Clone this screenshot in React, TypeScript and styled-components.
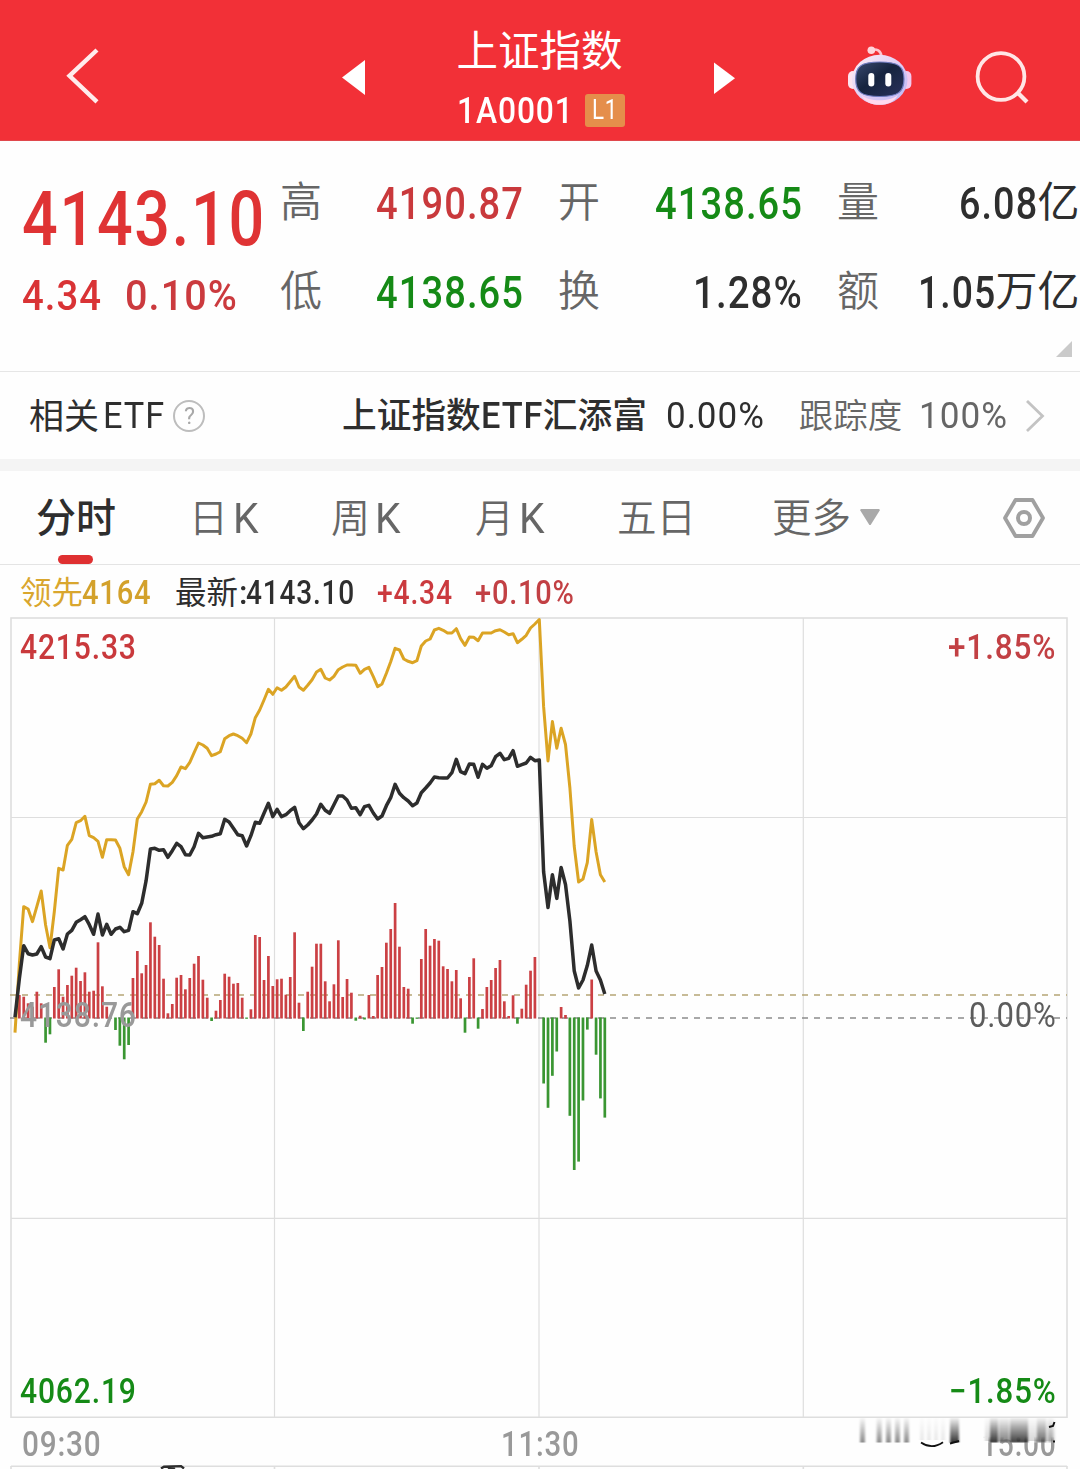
import React, { useLayoutEffect, useRef, useState } from "react";
import styled, { createGlobalStyle } from "styled-components";

const RED = "#d93335";
const GREEN = "#158a16";
const INK = "#2e2e2e";
const GREY = "#666666";

const Global = createGlobalStyle`
  * { box-sizing: border-box; }
  html, body { margin: 0; padding: 0; background: #fefefe; }
  body { width: 1080px; height: 1469px; overflow: hidden; font-family: Roboto, "Noto Sans CJK SC", sans-serif; }
`;

/* ---------- text ---------- */

const Cjk = styled.span<{ $size: number; $line: number; $color?: string; $weight?: number; $left?: number }>`
  display: block;
  flex: none;
  font-family: "Noto Sans CJK SC", sans-serif;
  font-size: ${(p) => p.$size}px;
  line-height: ${(p) => p.$line}px;
  color: ${(p) => p.$color ?? INK};
  font-weight: ${(p) => p.$weight ?? 400};
  margin-left: ${(p) => p.$left ?? 0}px;
  white-space: nowrap;
`;

const FigureBox = styled.span<{ $width: number; $size: number; $line: number; $color?: string; $weight?: number; $left?: number }>`
  display: block;
  flex: none;
  width: ${(p) => p.$width}px;
  height: ${(p) => p.$line}px;
  font-family: Roboto, sans-serif;
  font-size: ${(p) => p.$size}px;
  line-height: ${(p) => p.$line}px;
  color: ${(p) => p.$color ?? INK};
  font-weight: ${(p) => p.$weight ?? 500};
  margin-left: ${(p) => p.$left ?? 0}px;
`;

const TRACKING = 0.028;

const FigureText = styled.span`
  display: inline-block;
  white-space: nowrap;
  letter-spacing: ${TRACKING}em;
  transform-origin: 0 50%;
`;

type FigureProps = {
  children: string;
  width: number;
  size: number;
  line: number;
  color?: string;
  weight?: number;
  left?: number;
};

/* Condensed figures: the text is squeezed horizontally to its column width. */
function Figure({ children, width, size, line, color, weight, left }: FigureProps) {
  const ref = useRef<HTMLSpanElement>(null);
  const [scale, setScale] = useState(1);
  useLayoutEffect(() => {
    if (ref.current) setScale(width / (ref.current.offsetWidth - size * TRACKING));
  }, [width, size, children]);
  return (
    <FigureBox $width={width} $size={size} $line={line} $color={color} $weight={weight} $left={left}>
      <FigureText ref={ref} style={{ transform: `scaleX(${scale})` }}>
        {children}
      </FigureText>
    </FigureBox>
  );
}

/* ---------- header ---------- */

const Page = styled.main`
  width: 1080px;
  height: 1469px;
  overflow: hidden;
  display: flex;
  flex-direction: column;
  background: #fefefe;
`;

const Header = styled.header`
  height: 141px;
  flex: none;
  display: grid;
  grid-template-columns: 342px 395px 343px;
  background: #f23037;
  border-bottom: 1px solid #e0484c;
`;

const HeaderSide = styled.div<{ $pad: string }>`
  display: flex;
  align-items: flex-start;
  padding: ${(p) => p.$pad};
`;

const Switcher = styled.div`
  display: flex;
  justify-content: space-between;
  align-items: flex-start;
`;

const Arrow = styled.svg<{ $top: number }>`
  display: block;
  margin-top: ${(p) => p.$top}px;
`;

const TitleStack = styled.div`
  display: flex;
  flex-direction: column;
  align-items: center;
  padding-top: 18px;
`;

const CodeLine = styled.div`
  display: flex;
  margin-top: 2px;
  padding-left: 2px;
`;

const Level = styled.span`
  display: flex;
  justify-content: center;
  width: 40px;
  height: 33px;
  margin: 14px 0 0 12px;
  border-radius: 3px;
  background: #e58e4b;
`;

const Icon = styled.svg<{ $left?: number; $top?: number }>`
  display: block;
  flex: none;
  margin-left: ${(p) => p.$left ?? 0}px;
  margin-top: ${(p) => p.$top ?? 0}px;
`;

function Robot() {
  return (
    <Icon width="64" height="60" viewBox="0 0 64 60" $top={0}>
      <defs>
        <linearGradient id="shell" x1="0" y1="0" x2="1" y2="1">
          <stop offset="0" stopColor="#fff0f6" />
          <stop offset=".55" stopColor="#dccbf5" />
          <stop offset="1" stopColor="#b9b4f4" />
        </linearGradient>
        <linearGradient id="visor" x1="0" y1="0" x2="1" y2="1">
          <stop offset="0" stopColor="#3a4a70" />
          <stop offset=".45" stopColor="#16243f" />
          <stop offset="1" stopColor="#2a315c" />
        </linearGradient>
      </defs>
      <path d="M23 4c6-1.6 9.500 .5 10.500 6" fill="none" stroke="#ffc4cf" strokeWidth="2.6" />
      <circle cx="23.3" cy="4.2" r="3.8" fill="#ffd5dc" />
      <rect x="0" y="25" width="10" height="18" rx="5" fill="#fde3ef" />
      <rect x="53.400" y="25" width="10" height="18" rx="5" fill="#f3c9ee" />
      <ellipse cx="31.700" cy="33.800" rx="27.8" ry="25" fill="url(#shell)" />
      <path d="M13 49c8 7 29 7 37 0-4 7-10 9.800-18.500 9.800S17 56 13 49z" fill="#ffd9ee" />
      <path d="M31.700 16C50 16 56 20 56 33S50 50.500 31.700 50.500S7.700 46 7.700 33S13.500 16 31.700 16z" fill="url(#visor)" stroke="#6f7cc0" strokeWidth="1.2" />
      <rect x="20.3" y="27" width="6" height="13.6" rx="3" fill="#fff" />
      <rect x="37.3" y="27" width="6" height="13.6" rx="3" fill="#fff" />
    </Icon>
  );
}

/* ---------- quote ---------- */

const Quote = styled.section`
  height: 231px;
  flex: none;
  display: flex;
  align-items: flex-start;
  position: relative;
  border-bottom: 1px solid #e6e6e6;
`;

const PriceColumn = styled.div`
  width: 280px;
  padding: 30px 0 0 22px;
`;

const ChangeLine = styled.div`
  display: flex;
  margin-top: -1px;
`;

const StatGrid = styled.div`
  display: grid;
  grid-template-columns: 243px 244px 242.5px;
  grid-template-rows: 89px 68px;
  column-gap: 35px;
  padding-top: 29px;
`;

const Stat = styled.div`
  display: flex;
  justify-content: space-between;
  align-items: flex-start;
`;

const StatValue = styled.div`
  display: flex;
`;

const Corner = styled.svg`
  position: absolute;
  right: 8px;
  bottom: 14px;
`;

type StatItem = { label: string; value: string; width: number; color?: string; unit?: string };

const stats: StatItem[] = [
  { label: "高", value: "4190.87", width: 147, color: "#c9393c" },
  { label: "开", value: "4138.65", width: 147, color: GREEN },
  { label: "量", value: "6.08", width: 78, unit: "亿" },
  { label: "低", value: "4138.65", width: 147, color: GREEN },
  { label: "换", value: "1.28%", width: 109 },
  { label: "额", value: "1.05", width: 77, unit: "万亿" },
];

/* ---------- related ETF ---------- */

const EtfRow = styled.section`
  height: 87px;
  flex: none;
  display: flex;
  align-items: flex-start;
  padding-left: 29px;
`;

const Divider = styled.div`
  height: 12px;
  flex: none;
  background: #f4f4f4;
`;

const Help = styled.span`
  display: flex;
  justify-content: center;
  width: 32px;
  height: 32px;
  margin: 28px 0 0 9px;
  border: 2px solid #bdbdbd;
  border-radius: 50%;
`;

/* ---------- tabs ---------- */

const Tabs = styled.nav`
  height: 94px;
  flex: none;
  display: flex;
  align-items: flex-start;
  border-bottom: 1px solid #e4e4e4;
  position: relative;
`;

const Tab = styled.div<{ $width: number; $pad: number }>`
  display: flex;
  flex: none;
  width: ${(p) => p.$width}px;
  padding-left: ${(p) => p.$pad}px;
`;

const Underline = styled.span`
  position: absolute;
  left: 58px;
  bottom: 0;
  width: 35px;
  height: 9px;
  border-radius: 4.5px;
  background: #df3031;
`;

/* ---------- chart ---------- */

const Legend = styled.div`
  height: 52px;
  flex: none;
  display: flex;
  padding-left: 20px;
`;

const ChartArea = styled.section`
  position: relative;
  height: 801px;
  flex: none;
`;

const ChartSvg = styled.svg`
  display: block;
`;

const ChartLabel = styled.div<{ $top: number; $right?: boolean }>`
  position: absolute;
  top: ${(p) => p.$top}px;
  ${(p) => (p.$right ? "right: 24px;" : "left: 20px;")}
`;

const Axis = styled.div`
  position: relative;
  height: 51px;
  flex: none;
  display: flex;
`;

const AxisOverlay = styled.svg`
  position: absolute;
  left: 0;
  top: 0;
`;

const STEP = 4.369;
const X0 = 15;
const TOP = 617;
const BASE = 1018;

const lead = [
  1032.7, 963, 906.7, 909, 921.7, 906.7, 891, 925, 947.7, 911.7, 868.3, 870, 845.3, 839.3, 822.7, 820.7, 816.3, 835.7, 837.7, 841.3,
  857.3, 839.7, 839.7, 840, 848.3, 866.7, 874.7, 851.7, 819, 811.7, 802, 784.3, 783.7, 780.3, 785.7, 786, 782.3, 775.7, 767, 768.7,
  762.3, 752.7, 743, 745, 748.3, 755.7, 754, 751.7, 738.7, 735.7, 734, 735.7, 738.3, 742.7, 734, 717.7, 710, 700, 689.3, 694.3,
  687.7, 690.3, 687, 681.7, 676.3, 687, 690.3, 685.3, 679.7, 672, 669.3, 678, 680, 676.3, 669.7, 667, 665, 665, 665.3, 673.3,
  669.3, 667.3, 676.7, 686.7, 684, 673.3, 661.7, 648.3, 650, 659, 661.3, 662.7, 660.7, 646, 641, 639, 630, 628.3, 630.3, 633,
  633, 628.7, 638.7, 645.3, 637, 637.3, 640.7, 633, 633, 633, 630.7, 629.7, 632, 634.7, 633.7, 642.7, 639.3, 635.3, 628, 624,
  619.5, 706.4, 760.9, 721.6, 748.2, 728.2, 744.5, 788, 846, 882, 879, 862.7, 819.5, 852, 874.7, 882,
];

const price = [
  1017.3, 978.3, 945.7, 953.7, 955, 954, 946.7, 957, 958.7, 940, 938.7, 949, 934, 930.3, 922.3, 919.7, 916.7, 924.7, 934.3, 914,
  935, 924.3, 934.3, 929, 927.3, 931.7, 930.3, 911.7, 913.7, 903.3, 880.7, 849, 848.3, 850.3, 849.7, 857.3, 850.7, 843.3, 846.7, 854.7,
  855, 846.7, 833.3, 837.7, 837, 836.3, 834.7, 833.7, 819.3, 822, 828.3, 834.7, 835.7, 846, 835.7, 822.3, 823.3, 813.3, 803.3, 816.7,
  809.3, 816.7, 814.7, 810.7, 807.3, 822.7, 828.7, 825, 820, 814, 804.3, 810.3, 813.3, 804.7, 796, 796, 800, 808.3, 807.7, 814.7,
  806.7, 805.3, 813, 819, 816, 805.7, 797.7, 784.3, 793.3, 797.7, 801, 805.7, 803, 792.7, 788, 783, 777, 777.7, 778, 778,
  772.7, 759.3, 771.7, 773.7, 764, 764.3, 777.3, 764.3, 768.3, 765.7, 756.7, 753.3, 759.7, 758.3, 750.7, 766.3, 764.7, 763, 757.3, 760.7,
  760, 871.8, 907.5, 874.7, 898.4, 867.5, 884.5, 921, 970.7, 988, 980, 965.6, 945, 971, 980, 994,
];

/* End of each momentum bar; smaller than BASE rises in red, larger falls in green. */
const bars = [
  BASE, 995, 996.7, 1003.3, 1006.7, 991.7, 1003.3, 1042.7, 1034.3, 987, 969.3, 996.7, 985, 975.7, 967.7, 981, 972.3, 991.7, 990.7, 942.3,
  986.3, 1006.7, BASE, 1030, 1045.7, 1059.3, 1045, 978, 951, 973.3, 965, 922.3, 936.7, 945, 978.7, 1013.3, 1004, 977.7, 975, 989.3,
  978, 963.7, 956, 979.7, 997.7, 1021, 1010.7, 1000, 973.7, 976.7, 983.7, 983, 997.7, 1018.8, 1009.3, 935, 937, 980, 956, 986,
  979.3, 978.7, 994.7, 977, 932.3, 1002.7, 1031, 991.7, 966.7, 943.7, 943.7, 981.3, 1001.3, 984.3, 940.3, 997, 979, 992.7, 1020.7, 1015.7,
  1019.5, 995, 1016, 975, 967, 942.7, 929, 903, 946.7, 987, 988.7, 1023.7, 1018.8, 959, 929, 945.7, 939, 940.7, 966.3, 969,
  981.3, 970, 998.3, 1032.7, 977, 958.3, 1028.7, 1009, 987, 980, 968, 960, 1001.3, 1016, 995.3, 1023.7, 1008.7, 984.7, 970.7, 957,
  BASE, 1083.5, 1107.8, 1075.8, 1051.5, 1007, 1015, 1115.8, 1170, 1161.6, 1100.5, 1029.6, 979.5, 1054.7, 1098.4, 1117.6,
];

const toPoints = (ys: number[]) => ys.map((y, i) => `${(X0 + i * STEP).toFixed(1)},${y}`).join(" ");

function IntradayChart() {
  return (
    <ChartSvg width="1080" height="801" viewBox={`0 ${TOP} 1080 801`}>
      <g stroke="#dedede" strokeWidth="1.2" fill="none">
        <path d="M274.5 618V1417M539 618V1417M803.3 618V1417M11 817.5H1067M11 1218.3H1067" />
        <rect x="11" y="618" width="1056" height="799.3" strokeWidth="1.6" />
      </g>
      <path d="M10 995H1067" stroke="#b5a576" strokeWidth="1.6" strokeDasharray="6 6" />
      <path d="M10 1018H1067" stroke="#8c8c8c" strokeWidth="1.6" strokeDasharray="6 6" />
      {bars.map((y, i) =>
        y === BASE ? null : (
          <rect
            key={i}
            x={X0 + i * STEP - 1.35}
            width="2.7"
            y={Math.min(y, BASE - 0.5)}
            height={Math.abs(y - BASE) + 0.5}
            fill={y < BASE ? "#cb4044" : "#3a9632"}
          />
        )
      )}
      <polyline points={toPoints(lead)} fill="none" stroke="#dba424" strokeWidth="3" strokeLinejoin="round" />
      <polyline points={toPoints(price)} fill="none" stroke="#2d2d2d" strokeWidth="3.5" strokeLinejoin="round" />
    </ChartSvg>
  );
}

/* Faded remains of the watermark along the right end of the time axis. */
function Watermark() {
  const faint = [860, 876.7, 886, 895, 904];
  const dark: [number, number, number][] = [
    [950, 9, 0.8],
    [990, 8, 0.75],
    [999, 10, 0.4],
    [1010, 18, 0.7],
    [1037, 9, 0.5],
    [1048, 5, 0.25],
  ];
  return (
    <AxisOverlay width="1080" height="51" viewBox="0 1418 1080 51">
      <defs>
        <linearGradient id="smear" x1="0" y1="0" x2="0" y2="1">
          <stop offset="0" stopColor="#000" stopOpacity="0.06" />
          <stop offset="1" stopColor="#000" />
        </linearGradient>
        <linearGradient id="veil" x1="0" y1="0" x2="0" y2="1">
          <stop offset="0.75" stopColor="#fefefe" />
          <stop offset="1" stopColor="#fefefe" stopOpacity="0.2" />
        </linearGradient>
        <filter id="soften" x="-20%" y="-5%" width="140%" height="110%">
          <feGaussianBlur stdDeviation="0.9 0.2" />
        </filter>
      </defs>
      <rect x="858" y="1416" width="199" height="27" fill="url(#veil)" />
      <g filter="url(#soften)">
        <rect x="985" y="1418" width="70" height="23" fill="url(#smear)" opacity="0.15" />
        {faint.map((x) => (
          <rect key={x} x={x} y="1418" width="5" height="24.5" fill="url(#smear)" opacity="0.45" />
        ))}
        {[920, 927, 934, 941].map((x) => (
          <rect key={x} x={x} y="1418" width="4" height="22" fill="url(#smear)" opacity="0.08" />
        ))}
        {dark.map(([x, w, o]) => (
          <rect key={x} x={x} y="1418" width={w} height="24.5" fill="url(#smear)" opacity={o} />
        ))}
      </g>
      <path d="M921 1442.5q11 7.5 22-.3" fill="none" stroke="#111" strokeWidth="1.8" />
      <path d="M950 1443.5l9-2.5M1049 1427l4-1l1.500-4M1053 1441.5h2" fill="none" stroke="#111" strokeWidth="2" />
      <path d="M11 1466.3H1067M11 1466V1469M274.5 1466V1469M539 1466V1469M803.3 1466V1469M1067 1466V1469" stroke="#dedede" strokeWidth="1.6" />
      <path d="M161 1468.500l3-1.8 17-.6 3 2.400M168 1469.500l7-2" fill="none" stroke="#2d2d2d" strokeWidth="2.4" />
    </AxisOverlay>
  );
}

export default function App() {
  return (
    <Page>
      <Global />
      <Header>
        <HeaderSide $pad="48px 0 0 66px">
          <Icon width="34" height="57" viewBox="66 48 34 57">
            <path d="M97 50L69.5 75.8L97 101.8" fill="none" stroke="#ffecec" strokeWidth="4.4" />
          </Icon>
        </HeaderSide>
        <Switcher>
          <Arrow width="24" height="36" viewBox="342 60 24 36" $top={60}>
            <path d="M365 60V95L342 77.5z" fill="#fff" />
          </Arrow>
          <TitleStack>
            <Cjk $size={41.5} $line={60} $color="#fff" $weight={400}>上证指数</Cjk>
            <CodeLine>
              <Figure width={116} size={37} line={62} color="#fff" weight={500}>1A0001</Figure>
              <Level>
                <Figure width={25} size={27} line={33} color="#fff" weight={400}>L1</Figure>
              </Level>
            </CodeLine>
          </TitleStack>
          <Arrow width="24" height="36" viewBox="713 60 24 36" $top={60}>
            <path d="M714 62.5V94L735 78.2z" fill="#fff" />
          </Arrow>
        </Switcher>
        <HeaderSide $pad="46px 0 0 111px">
          <Robot />
          <Icon width="56" height="56" viewBox="974 48 56 56" $left={62} $top={2}>
            <circle cx="1001" cy="76.5" r="23.4" fill="none" stroke="#ffe6e6" strokeWidth="3.8" />
            <path d="M1018.5 93.5L1027 102" stroke="#ffe6e6" strokeWidth="4.2" />
          </Icon>
        </HeaderSide>
      </Header>

      <Quote>
        <PriceColumn>
          <Figure width={242} size={75.5} line={96} color="#df3334">4143.10</Figure>
          <ChangeLine>
            <Figure width={79} size={43} line={58} color={RED}>4.34</Figure>
            <Figure width={112} size={43} line={58} color="#cb3a3e" left={24}>0.10%</Figure>
          </ChangeLine>
        </PriceColumn>
        <StatGrid>
          {stats.map((s) => (
            <Stat key={s.label}>
              <Cjk $size={42} $line={58} $color={GREY} $weight={350}>{s.label}</Cjk>
              <StatValue>
                <Figure width={s.width} size={44} line={69} color={s.color}>{s.value}</Figure>
                {s.unit && <Cjk $size={42} $line={58} $left={0}>{s.unit}</Cjk>}
              </StatValue>
            </Stat>
          ))}
        </StatGrid>
        <Corner width="16" height="16" viewBox="0 0 16 16">
          <path d="M16 0V16H0z" fill="#cacaca" />
        </Corner>
      </Quote>

      <EtfRow>
        <Cjk $size={35} $line={83}>相关</Cjk>
        <Figure width={61} size={36} line={88} weight={400} left={4}>ETF</Figure>
        <Help>
          <Figure width={11} size={24} line={28} color="#a8a8a8" weight={400}>?</Figure>
        </Help>
        <Cjk $size={34.7} $line={83} $weight={500} $left={137}>上证指数</Cjk>
        <Figure width={61} size={36} line={88} weight={500} left={0}>ETF</Figure>
        <Cjk $size={34.7} $line={83} $weight={500} $left={1}>汇添富</Cjk>
        <Figure width={98} size={37.5} line={86} weight={400} left={19}>0.00%</Figure>
        <Cjk $size={34.5} $line={83} $color={GREY} $weight={350} $left={35}>跟踪度</Cjk>
        <Figure width={88} size={37.5} line={86} weight={400} color={GREY} left={17}>100%</Figure>
        <Icon width="20" height="34" viewBox="0 0 20 34" $left={18} $top={27}>
          <path d="M2 2L17.5 17L2 32" fill="none" stroke="#c3c3c3" strokeWidth="2.8" />
        </Icon>
      </EtfRow>
      <Divider />

      <Tabs>
        <Tab $width={189} $pad={36}><Cjk $size={40} $line={88} $weight={500}>分时</Cjk></Tab>
        {[["日", 142], ["周", 144], ["月", 142]].map(([label, width]) => (
          <Tab key={label} $width={width as number} $pad={0}>
            <Cjk $size={39} $line={88} $color={GREY} $weight={350}>{label}</Cjk>
            <Figure width={26} size={42} line={95} color={GREY} weight={400} left={5}>K</Figure>
          </Tab>
        ))}
        <Tab $width={154} $pad={0}><Cjk $size={39.5} $line={88} $color={GREY} $weight={350}>五日</Cjk></Tab>
        <Tab $width={230} $pad={1}>
          <Cjk $size={39.5} $line={88} $color={GREY} $weight={350}>更多</Cjk>
          <Icon width="20" height="17" viewBox="0 0 20 17" $left={8.5} $top={38}>
            <path d="M1 0H19L20 1L10.6 16H9.4L0 1z" fill="#a9a9a9" />
          </Icon>
        </Tab>
        <Icon width="44" height="42" viewBox="0 0 44 42" $left={1} $top={26}>
          <path d="M13.5 3H30.5L41 21L30.5 39H13.5L3 21z" fill="none" stroke="#a0a0a0" strokeWidth="3.8" strokeLinejoin="round" />
          <circle cx="22" cy="21" r="6" fill="none" stroke="#a0a0a0" strokeWidth="4" />
        </Icon>
        <Underline />
      </Tabs>

      <Legend>
        <Cjk $size={31.5} $line={50} $color="#d9a62e">领先</Cjk>
        <Figure width={69} size={32.5} line={57} color="#d3a12b" left={-1}>4164</Figure>
        <Cjk $size={31.5} $line={50} $left={24}>最新</Cjk>
        <Figure width={8} size={32.5} line={57} left={1}>:</Figure>
        <Figure width={108} size={32.5} line={57} left={-1}>4143.10</Figure>
        <Figure width={75} size={32.5} line={57} color="#cb3a3e" left={23}>+4.34</Figure>
        <Figure width={99} size={32.5} line={57} color="#c24044" left={23}>+0.10%</Figure>
      </Legend>

      <ChartArea>
        <IntradayChart />
        <ChartLabel $top={11}><Figure width={116} size={35} line={40} color="#c9393c">4215.33</Figure></ChartLabel>
        <ChartLabel $top={11} $right><Figure width={108} size={35} line={40} color="#c24044">+1.85%</Figure></ChartLabel>
        <ChartLabel $top={379}><Figure width={116} size={35} line={40} color="#999999">4138.76</Figure></ChartLabel>
        <ChartLabel $top={379} $right><Figure width={87} size={35} line={40} color="#5c5c5c" weight={400}>0.00%</Figure></ChartLabel>
        <ChartLabel $top={755}><Figure width={116} size={35} line={40} color={GREEN}>4062.19</Figure></ChartLabel>
        <ChartLabel $top={755} $right><Figure width={107} size={35} line={40} color={GREEN}>−1.85%</Figure></ChartLabel>
      </ChartArea>

      <Axis>
        <Figure width={79} size={35} line={53} color="#999999" left={22}>09:30</Figure>
        <Figure width={78} size={35} line={53} color="#999999" left={400}>11:30</Figure>
        <Figure width={75} size={35} line={53} color="#999999" left={402}>15:00</Figure>
        <Watermark />
      </Axis>
    </Page>
  );
}
